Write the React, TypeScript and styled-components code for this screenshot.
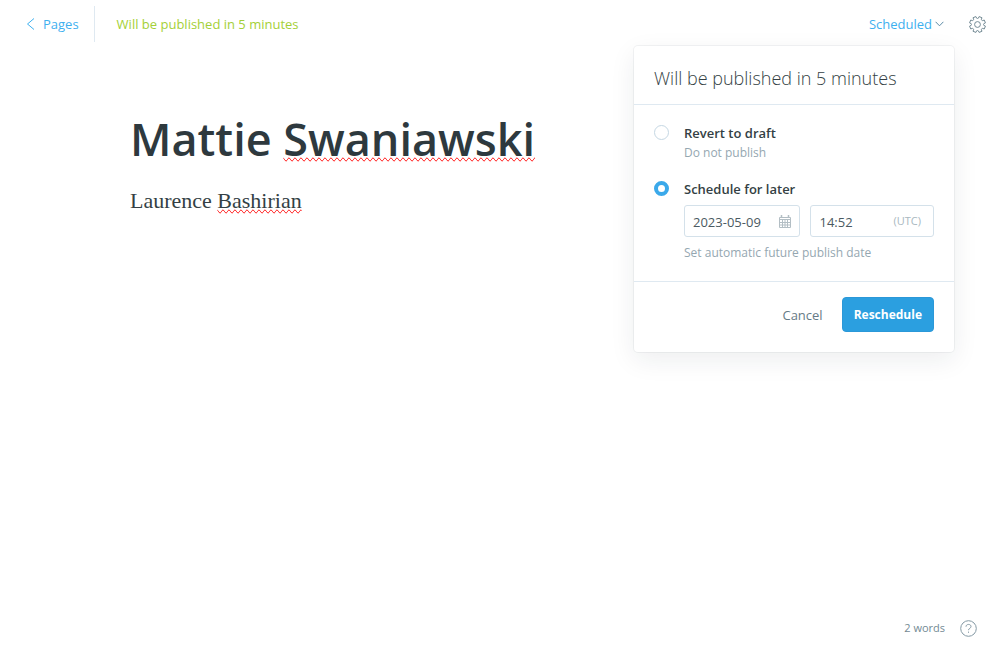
import React, { useState } from "react";
import styled, { createGlobalStyle } from "styled-components";

const GlobalStyle = createGlobalStyle`
  *, *::before, *::after { box-sizing: border-box; }
  body {
    margin: 0;
    background: #fff;
    color: #343f44;
    font-family: "Open Sans", "Noto Sans", sans-serif;
    font-size: 13px;
    line-height: 20px;
  }
  h1, h2, p { margin: 0; font-weight: 400; }
  button, input { font: inherit; }
`;

const Page = styled.div`
  min-height: 100vh;
  display: flex;
  flex-direction: column;
`;

const TopBar = styled.header`
  display: flex;
  align-items: center;
  justify-content: space-between;
  height: 48px;
  padding: 0 14px 0 26px;
`;

const BarGroup = styled.div<{ $gap: number }>`
  display: flex;
  align-items: center;
  gap: ${(p) => p.$gap}px;
`;

const BackLink = styled.a`
  display: flex;
  align-items: center;
  gap: 8px;
  height: 36px;
  padding-right: 15px;
  border-right: 1px solid #dfe9f1;
  color: #3eb0ef;
  text-decoration: none;
`;

const StatusText = styled.span`
  color: #a4d037;
`;

const PlainButton = styled.button<{ $color: string }>`
  display: flex;
  align-items: center;
  gap: 3px;
  padding: 0;
  border: 0;
  background: none;
  color: ${(p) => p.$color};
  cursor: pointer;
`;

const MenuAnchor = styled.div`
  position: relative;
`;

const Popover = styled.form`
  position: absolute;
  top: 32px;
  right: -10px;
  width: 320px;
  border-radius: 4px;
  background: #fff;
  box-shadow: 0 0 0 1px rgba(99, 114, 130, 0.08), 0 8px 26px rgba(27, 39, 51, 0.08);
`;

const PopoverHeader = styled.header`
  padding: 20px 20px 14px;
  border-bottom: 1px solid #dfe9f1;
`;

const PopoverTitle = styled.h2`
  font-size: 18px;
  font-weight: 300;
  line-height: 24px;
  white-space: nowrap;
`;

const PopoverBody = styled.section`
  display: flex;
  flex-direction: column;
  gap: 16px;
  padding: 18px 20px;
`;

const Option = styled.div`
  display: grid;
  grid-template-columns: 15px minmax(0, 1fr);
  column-gap: 15px;
  align-items: start;
`;

const Radio = styled.input`
  appearance: none;
  width: 15px;
  height: 15px;
  margin: 2px 0 0;
  border: ${(p) => (p.checked ? "4px solid #3ba9ea" : "1px solid #c5d7e3")};
  border-radius: 50%;
  background: #fff;
`;

const OptionLabel = styled.label`
  font-weight: 600;
`;

const OptionHint = styled.p`
  grid-column: 2;
  color: #95a7b1;
  font-size: 12px;
`;

const Fields = styled.div`
  grid-column: 2;
  display: flex;
  gap: 10px;
  margin: 6px 0;
`;

const Field = styled.div<{ $grow: number }>`
  flex: ${(p) => p.$grow} 1 0;
  min-width: 0;
  display: flex;
  align-items: center;
  height: 32px;
  padding: 0 8px;
  border: 1px solid #d4e1ea;
  border-radius: 3px;
`;

const FieldInput = styled.input`
  flex: 1;
  min-width: 0;
  padding: 2px 0 0;
  border: 0;
  outline: 0;
  background: none;
  color: #4b5a62;
  line-height: 20px;
`;

const Zone = styled.span`
  padding-right: 4px;
  color: #a9b8c0;
  font-size: 11px;
`;

const PopoverFooter = styled.footer`
  display: flex;
  justify-content: flex-end;
  gap: 19px;
  padding: 15px 20px 20px;
  border-top: 1px solid #dfe9f1;
`;

const PrimaryButton = styled.button`
  height: 35px;
  padding: 0 11px;
  border: 1px solid #2b98d8;
  border-radius: 4px;
  background: #2b9fe0;
  color: #fff;
  font-size: 12px;
  font-weight: 700;
  cursor: pointer;
`;

const Editor = styled.main`
  flex: 1;
  width: 100%;
  max-width: 740px;
  margin: 0 auto;
  padding-top: 60px;
`;

const PostTitle = styled.h1`
  color: #2e393e;
  font-size: 45px;
  font-weight: 600;
  line-height: 62px;
`;

const PostBody = styled.p`
  margin-top: 16px;
  font-family: "Liberation Serif", serif;
  font-size: 22px;
  line-height: 30px;
`;

const Misspelled = styled.span`
  text-decoration-line: spelling-error;
`;

const StatusBar = styled.footer`
  display: flex;
  align-items: center;
  justify-content: flex-end;
  gap: 15px;
  padding: 22px 23px;
  color: #738a94;
  font-size: 11px;
`;

const ChevronLeft = () => (
  <svg width="9" height="12" viewBox="0 0 9 12" fill="none" stroke="#3eb0ef" aria-hidden="true">
    <path d="M8 0.5 L1.5 6 L8 11.5" />
  </svg>
);

const ChevronDown = () => (
  <svg width="9" height="6" viewBox="0 0 9 6" fill="none" stroke="#5c8ba6" aria-hidden="true">
    <path d="M0.6 0.8 L4.5 4.8 L8.4 0.8" />
  </svg>
);

const gearPath = (() => {
  const pts: string[] = [];
  for (let i = 0; i < 8; i++) {
    const base = ((i + 0.5) * Math.PI) / 4;
    const at = (r: number, a: number) =>
      `${(8.5 + r * Math.cos(base + a)).toFixed(2)} ${(8.5 + r * Math.sin(base + a)).toFixed(2)}`;
    pts.push(`${i ? "L" : "M"}${at(8.1, -0.19)} L${at(8.1, 0.19)} L${at(6.4, 0.26)} Q${at(5.7, 0.39)} ${at(6.4, 0.53)}`);
  }
  return pts.join(" ") + "Z";
})();

const Gear = () => (
  <svg width="17" height="17" viewBox="0 0 17 17" fill="none" stroke="#738a94" strokeLinejoin="round" aria-hidden="true">
    <path d={gearPath} />
    <circle cx="8.5" cy="8.5" r="2.9" />
  </svg>
);

const Calendar = () => (
  <svg width="12" height="13" viewBox="0 0 12 13" fill="none" stroke="#b3bec4" aria-hidden="true">
    <path d="M0.5 2.5H11.5V12.5H0.5Z M0.5 4.5H11.5 M0.5 7.5H11.5 M0.5 10H11.5 M3.5 4.5V12.5 M6 4.5V12.5 M8.5 4.5V12.5" />
    <path d="M2.5 0V3 M9.5 0V3" strokeWidth="1.5" />
  </svg>
);

const Help = () => (
  <svg width="17" height="17" viewBox="0 0 17 17" fill="none" stroke="#8499a4" aria-hidden="true">
    <circle cx="8.5" cy="8.5" r="7.8" />
    <path d="M6 6.7C6 3.7 11 3.7 11 6.5C11 8.4 8.5 8.2 8.5 10.2" />
    <path d="M8.5 11.6V12.8" />
  </svg>
);

export default function App() {
  const [mode, setMode] = useState("schedule");
  const [date, setDate] = useState("2023-05-09");
  const [time, setTime] = useState("14:52");

  return (
    <Page>
      <GlobalStyle />
      <TopBar>
        <BarGroup $gap={22}>
          <BackLink href="#pages">
            <ChevronLeft />
            Pages
          </BackLink>
          <StatusText>Will be published in 5 minutes</StatusText>
        </BarGroup>
        <BarGroup $gap={25}>
          <MenuAnchor>
            <PlainButton type="button" $color="#3eb0ef" aria-expanded="true">
              Scheduled
              <ChevronDown />
            </PlainButton>
            <Popover onSubmit={(e) => e.preventDefault()}>
              <PopoverHeader>
                <PopoverTitle>Will be published in 5 minutes</PopoverTitle>
              </PopoverHeader>
              <PopoverBody>
                <Option>
                  <Radio
                    type="radio"
                    name="mode"
                    id="draft"
                    checked={mode === "draft"}
                    onChange={() => setMode("draft")}
                  />
                  <OptionLabel htmlFor="draft">Revert to draft</OptionLabel>
                  <OptionHint>Do not publish</OptionHint>
                </Option>
                <Option>
                  <Radio
                    type="radio"
                    name="mode"
                    id="schedule"
                    checked={mode === "schedule"}
                    onChange={() => setMode("schedule")}
                  />
                  <OptionLabel htmlFor="schedule">Schedule for later</OptionLabel>
                  <Fields>
                    <Field $grow={14}>
                      <FieldInput aria-label="Publish date" value={date} onChange={(e) => setDate(e.target.value)} />
                      <Calendar />
                    </Field>
                    <Field $grow={15}>
                      <FieldInput aria-label="Publish time" value={time} onChange={(e) => setTime(e.target.value)} />
                      <Zone>(UTC)</Zone>
                    </Field>
                  </Fields>
                  <OptionHint>Set automatic future publish date</OptionHint>
                </Option>
              </PopoverBody>
              <PopoverFooter>
                <PlainButton type="button" $color="#667b86">
                  Cancel
                </PlainButton>
                <PrimaryButton type="submit">Reschedule</PrimaryButton>
              </PopoverFooter>
            </Popover>
          </MenuAnchor>
          <PlainButton type="button" $color="#738a94" aria-label="Settings">
            <Gear />
          </PlainButton>
        </BarGroup>
      </TopBar>
      <Editor>
        <PostTitle>
          Mattie <Misspelled>Swaniawski</Misspelled>
        </PostTitle>
        <PostBody>
          Laurence <Misspelled>Bashirian</Misspelled>
        </PostBody>
      </Editor>
      <StatusBar>
        <span>2 words</span>
        <PlainButton type="button" $color="#738a94" aria-label="Help">
          <Help />
        </PlainButton>
      </StatusBar>
    </Page>
  );
}
